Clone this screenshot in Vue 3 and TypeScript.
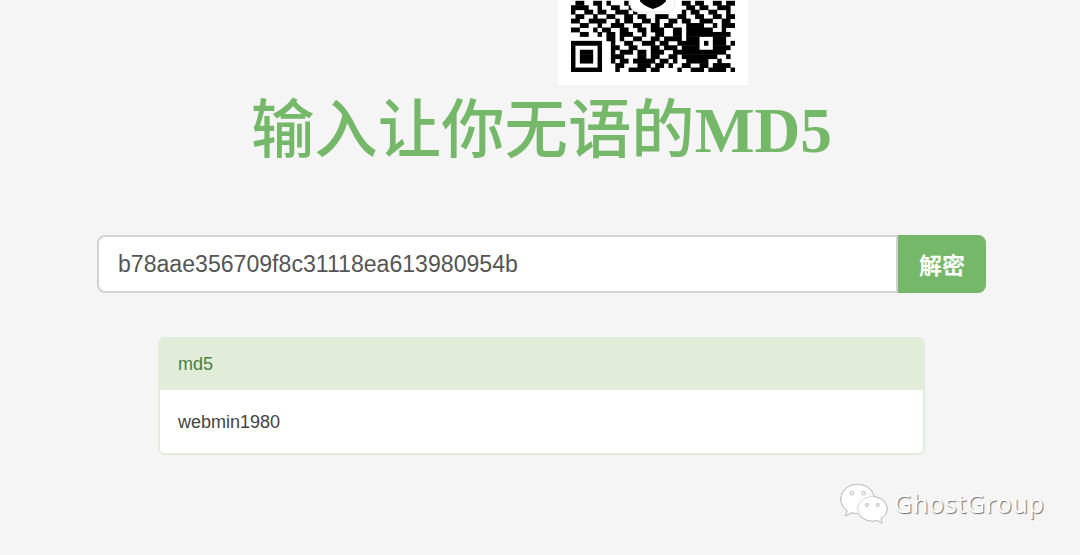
<script setup lang="ts">
const rows: string[] = [
  '0110011010001010000000000110110011011',
  '1111001001100110000000000011011001110',
  '1001101100111010000000000101100110010',
  '0110010011001101100111001100110011011',
  '1100111100101100110100110110011100110',
  '0011001001110011001101100011110010111',
  '1100010110011001101110011011111100100',
  '0011001011011100100110011011111111110',
  '0000000011010011001101111011100011100',
  '1111111001001100111011001111101011101',
  '1000001001100110001101110111100011110',
  '1011101001011101101110011111111111100',
  '1011101001110001101100110111111110010',
  '1011101001011011111011010011111001000',
  '1000001000110001110110100110011011110',
  '1111111000100111101100001001110111101',
]

// Merge dark modules into horizontal runs so that no seams show between them.
const runs = rows.flatMap((row, r) =>
  [...row.matchAll(/1+/g)].map((m) => ({
    x: m.index ?? 0,
    y: r + 0.18,
    w: m[0].length,
  })),
)
</script>

<template>
  <main class="page">
    <div class="qr">
      <svg class="qr-code" viewBox="0 0 37 16.18" preserveAspectRatio="none" aria-hidden="true">
        <rect v-for="(c, i) in runs" :key="i" :x="c.x" :y="c.y" :width="c.w" height="1.1" fill="#000" />
        <rect x="13.4" y="-3" width="10" height="5.700" rx="1.6" fill="#fff" stroke="#ddd" stroke-width="0.15" />
        <path d="M15.600 0h5.800v.3q-1 1.200-2.900 1.700q-1.900-.5-2.900-1.700z" fill="#000" />
      </svg>
    </div>

    <h1 class="title"><span class="title-cjk">输入让你无语的</span>MD5</h1>

    <form class="search" @submit.prevent>
      <input class="search-input" type="text" value="b78aae356709f8c31118ea613980954b" />
      <button class="search-button" type="submit">解密</button>
    </form>

    <section class="card">
      <header class="card-head">md5</header>
      <div class="card-body">webmin1980</div>
    </section>

    <div class="mark">
      <svg class="mark-icon" viewBox="0 0 50 42" aria-hidden="true">
        <path class="bubble" d="M18 1C8.500 1 1 7.700 1 16c0 4.800 2.500 8.900 6.400 11.700L5.800 33l6-3.200c2 .6 4 .9 6.200.9 9.500 0 17-6.600 17-14.700S27.500 1 18 1z" />
        <path class="bubble" d="M33 13.500c-8.300 0-15 5.500-15 12.400S24.700 38.300 33 38.300c1.700 0 3.400-.2 5-.7l4.800 3-1.200-4.800c3.800-2.300 6.400-6 6.400-9.900 0-6.900-6.700-12.400-15-12.400z" />
        <circle class="eye" cx="12" cy="10" r="1.900" />
        <circle class="eye" cx="24" cy="10" r="1.900" />
        <circle class="eye" cx="27.500" cy="22" r="1.600" />
        <circle class="eye" cx="38.500" cy="22" r="1.600" />
      </svg>
      <span class="mark-text">GhostGroup</span>
    </div>
  </main>
</template>

<style>
html,
body {
  margin: 0;
  background: #f5f5f5;
}
</style>

<style scoped>
.page {
  position: relative;
  width: 1080px;
  height: 555px;
  overflow: hidden;
  background: #f5f5f5;
  font-family: "Liberation Sans", "Noto Sans CJK SC", sans-serif;
  display: flex;
  flex-direction: column;
}
.qr {
  box-sizing: border-box;
  width: 190px;
  height: 85px;
  margin-left: 558px;
  padding: 0 13px 13px;
  background: #fff;
  display: flex;
  align-items: flex-end;
}
.qr-code {
  display: block;
  width: 164.6px;
  height: 72px;
  filter: blur(0.35px);
}
.title {
  margin: 8px 0 0 3px;
  text-align: center;
  font-family: "Liberation Serif", "Noto Sans CJK SC", serif;
  font-size: 63.4px;
  line-height: 76px;
  font-weight: 700;
  color: #76b86a;
  white-space: nowrap;
}
.title-cjk {
  font-weight: 500;
}
.search {
  display: flex;
  width: 889px;
  height: 58px;
  margin: 66px 0 0 97px;
}
.search-input {
  box-sizing: border-box;
  flex: 1;
  min-width: 0;
  height: 58px;
  padding: 1px 19px 0;
  border: 2px solid #d2d2d2;
  border-radius: 8px 0 0 8px;
  background: #fff;
  color: #555;
  font-family: inherit;
  font-size: 23.1px;
  outline: none;
}
.search-button {
  width: 88px;
  height: 58px;
  padding: 0;
  border: 0;
  border-radius: 0 8px 8px 0;
  background: #76b86a;
  color: #fff;
  font-family: inherit;
  font-size: 23px;
  font-weight: 700;
}
.card {
  box-sizing: border-box;
  width: 767px;
  height: 118px;
  margin: 44px 0 0 158px;
  border: 2px solid #e3eddb;
  border-radius: 6px;
  overflow: hidden;
  background: #fff;
  font-size: 18px;
}
.card-head {
  height: 51px;
  padding-left: 18px;
  background: #e1edd9;
  color: #468043;
  line-height: 50px;
}
.card-body {
  padding-left: 18px;
  color: #444;
  line-height: 65px;
}
.mark {
  position: absolute;
  left: 840px;
  top: 483px;
  display: flex;
  align-items: center;
  gap: 5px;
}
.mark-icon {
  display: block;
  width: 49px;
  height: 42px;
  filter: drop-shadow(0.5px 0.5px 0.6px rgba(0, 0, 0, 0.55));
}
.bubble {
  fill: #fff;
  stroke: #c8c8c8;
  stroke-width: 0.8;
}
.eye {
  fill: #f5f5f5;
  stroke: #999;
  stroke-width: 0.6;
}
.mark-text {
  font-family: "Open Sans", sans-serif;
  font-size: 25px;
  letter-spacing: 0.7px;
  color: #fff;
  text-shadow: 1px 1px 1px rgba(0, 0, 0, 0.55);
  margin-top: -2px;
}
</style>
